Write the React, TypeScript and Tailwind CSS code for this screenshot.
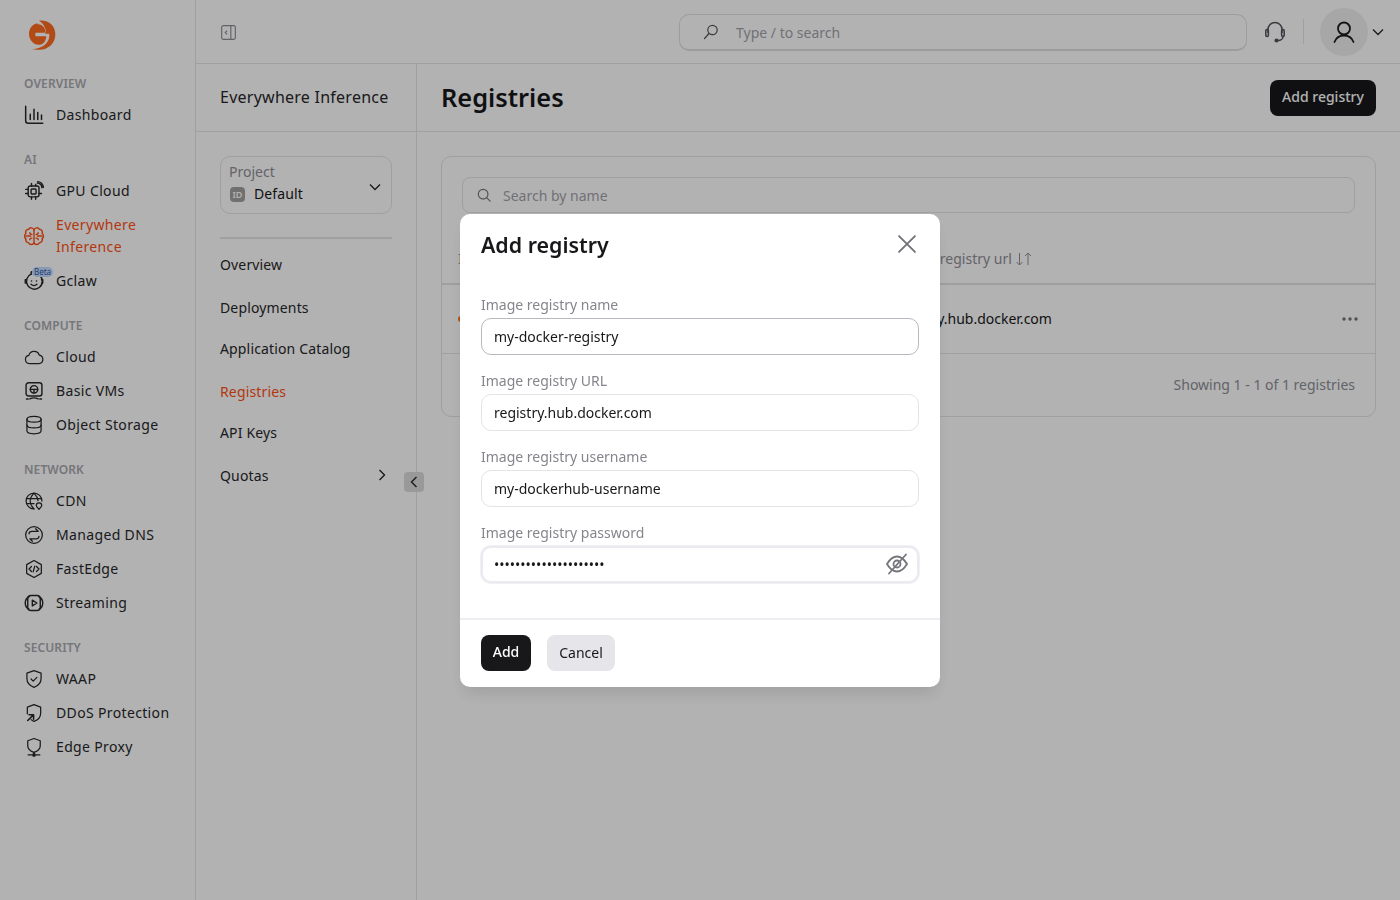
import React from "react";

const S = ({ className = "w-[20px] h-[20px]", children, sw = 1.7 }: { className?: string; children: React.ReactNode; sw?: number }) => (
  <svg viewBox="0 0 24 24" fill="none" stroke="currentColor" strokeWidth={sw} strokeLinecap="round" strokeLinejoin="round" className={className}>
    {children}
  </svg>
);

const Logo = () => (
  <svg viewBox="0 0 28 28.500" preserveAspectRatio="none" className="w-[28px] h-[30px]">
    <path fill="#ff6a1f" d="M11 .8c7-1.200 14 2.500 15.800 9.200 2 7.500-2 14.500-8.800 17-4.500 1.700-9.500 1.500-14.300.9 3.500-.4 7-1 10-2.400 5.500-2.600 8.400-7.700 7.400-12.500H17c.8-2 .8-3.800 0-5.500C15.500 4 13 2 11 .8z" />
    <path fill="#ff6a1f" d="M9.500 3C4.500 3.800 1 8 1 13c0 5.800 4.500 10.500 9.500 10.500 3.600 0 6.300-2 7.300-5.500.3-.9.500-1.700.5-2.500H7.500c-.3-1.200-.3-2.300 0-3.500h9.300c.6-1.800.3-3.500-1-5.200-1.500-2-3.800-3-6.300-2.800z" />
  </svg>
);

const Dash = () => (
  <S className="w-[20px] h-[20px]" sw={1.8}>
    <path d="M2 1.500V19a3 3 0 0 0 3 3h17.500" />
    <path d="M7.500 11v6.500M12 5v12.500M16.500 9v8.500M21 12v5.500" />
  </S>
);
const Gpu = () => (
  <S>
    <rect x="5" y="6" width="13" height="13" rx="2.500" />
    <rect x="8.500" y="9.500" width="6" height="6" rx="1" />
    <path d="M2 10h3M2 15h3M18 15h3M9 19v3M14 19v3M9 3v3M14 6V4" />
    <path d="M16 2.500a6 6 0 0 1 5.500 5.500M16.500 0.800a8 8 0 0 1 6.800 6.800" />
  </S>
);
const Brain = () => (
  <S>
    <path d="M12 5a3.500 3.500 0 0 0-6.500-1A3.500 3.500 0 0 0 2.300 9a3.800 3.800 0 0 0 0 6.200 3.500 3.500 0 0 0 3.200 4.800 3.500 3.500 0 0 0 6.500 .0 3.500 3.500 0 0 0 6.500 0 3.500 3.500 0 0 0 3.200-4.800 3.800 3.800 0 0 0 0-6.200A3.500 3.500 0 0 0 18.500 4 3.500 3.500 0 0 0 12 5z" />
    <path d="M12 5v15M2.500 12H8M21.500 12H16M7 8c0 1.500 1 2 2.500 2M17 8c0 1.500-1 2-2.500 2M7 16.500c0-1.500 1-2 2.500-2M17 16.500c0-1.500-1-2-2.500-2" />
  </S>
);
const Claw = () => (
  <S>
    <path d="M9 3.500a9.500 9.500 0 1 0 9.500 1.500" />
    <path d="M9 3.500C8 2 8.500.8 10 .8" />
    <path d="M3 10.500H1.500v4H3M21 10.500h1.500v4H21" />
    <circle cx="9" cy="12" r="1" fill="currentColor" stroke="none" />
    <circle cx="15" cy="12" r="1" fill="currentColor" stroke="none" />
    <path d="M8.500 16c2 2 5 2 7 0" />
  </S>
);
const Cloud = () => (
  <S sw={1.5}>
    <path d="M6.500 20A5 5 0 0 1 5.800 10.100a6.500 6.500 0 0 1 12.500-.4 5.200 5.200 0 0 1-.4 10.300z" />
  </S>
);
const Vm = () => (
  <S>
    <rect x="2.500" y="2" width="19" height="16" rx="3" />
    <circle cx="12" cy="10" r="4.500" />
    <path d="M7.500 10h9M12 10v4.500" />
    <path d="M7 21.500c3-1.500 7-1.500 10 0M3 21.500h2M19 21.500h2" />
  </S>
);
const Db = () => (
  <S sw={1.5}>
    <ellipse cx="12" cy="5" rx="8.500" ry="3.500" />
    <path d="M3.500 5v14c0 2 3.800 3.500 8.500 3.500s8.500-1.500 8.500-3.500V5" />
    <path d="M3.500 12c0 2 3.800 3.500 8.500 3.500s8.500-1.500 8.500-3.500" />
  </S>
);
const Globe = () => (
  <S sw={1.5}>
    <path d="M21.500 12A9.500 9.500 0 1 0 12 21.500" />
    <path d="M12 2.500c-6 6-6 13 0 19M12 2.500c3 3 4.500 6 4.800 9M3 9h18M3 15h9" />
    <path d="M18 22c-2-1.800-3.300-3-3.300-4.500a3.300 3.300 0 0 1 6.600 0c0 1.500-1.300 2.700-3.300 4.500z" />
  </S>
);
const Dns = () => (
  <S sw={1.5}>
    <circle cx="12" cy="12" r="10" />
    <path d="M6 10.500c0-2 1.500-3 3.500-3H17l-3-3M18 13.500c0 2-1.500 3-3.500 3H7l3 3" />
  </S>
);
const Edge = () => (
  <S sw={1.5}>
    <path d="M12 1.800l8.800 5v10.400L12 22.200l-8.800-5V6.800z" />
    <path d="M9 9l-3 3 3 3M15 9l3 3-3 3M13 8.500l-2 7" />
  </S>
);
const Stream = () => (
  <S>
    <path d="M6 4.500C3 6 1.500 8.500 1.500 12s1.500 6 4.500 7.500M18 4.500c3 1.500 4.500 4 4.500 7.500s-1.500 6-4.500 7.500" />
    <path d="M10 8.500l5.500 3.500-5.500 3.500z" />
    <rect x="4.500" y="3" width="15" height="18" rx="4" />
  </S>
);
const Shield = () => (
  <S sw={1.5}>
    <path d="M12 2l8.500 3v6.500c0 5-3.500 8.800-8.500 10.500-5-1.700-8.500-5.500-8.500-10.500V5z" />
    <path d="M8.500 12l2.500 2.500 4.500-4.500" />
  </S>
);
const Ddos = () => (
  <S sw={1.5}>
    <path d="M4 13V5l8-3 8 3v7c0 5-3.500 8.500-8 10-1.500-.5-2.500-1-3.500-2" />
    <path d="M4.500 21L11 14.500M6 14h5.500v5.500" strokeWidth="1.900" />
  </S>
);
const Proxy = () => (
  <S sw={1.5}>
    <path d="M12 1.800l7.500 2.700v6c0 3.800-3 6.500-7.500 8-4.500-1.500-7.500-4.200-7.500-8v-6z" />
    <path d="M12 18.500v2M5 21.500h4.500M14.500 21.500H19" />
    <circle cx="12" cy="21.500" r="1.500" fill="currentColor" />
  </S>
);

const Item = ({ icon, children, active, badge }: { icon: React.ReactNode; children: React.ReactNode; active?: boolean; badge?: boolean }) => (
  <div className={`relative flex items-center min-h-[34px] ${active ? "text-[#ff4f14]" : "text-[#27272a]"}`}>
    <span className="w-[32px] flex shrink-0 items-center">{icon}</span>
    <span className="text-[14px] leading-[22px] tracking-[0.35px]">{children}</span>
    {badge && (
      <span className="absolute left-[8px] top-[3px] rounded-[5px] bg-[#c6dcff] px-[2px] text-[8px] leading-[10px] text-[#2a5aa8]">Beta</span>
    )}
  </div>
);
const Label = ({ children, className = "" }: { children: React.ReactNode; className?: string }) => (
  <div className={`text-[12px] leading-[16px] font-semibold text-[#a9a9b0] mb-[6px] tracking-[0.1px] ${className}`}>{children}</div>
);

const Sidebar = () => (
  <aside className="w-[196px] shrink-0 border-r border-[#e4e4e7] pl-[24px] text-[#27272a]">
    <div className="h-[76px] pt-[20px] pl-[4px]">
      <Logo />
    </div>
    <Label>OVERVIEW</Label>
    <Item icon={<Dash />}>Dashboard</Item>
    <Label className="mt-[20px]">AI</Label>
    <Item icon={<Gpu />}>GPU Cloud</Item>
    <div className="py-[6px]">
      <Item icon={<Brain />} active>
        Everywhere
        <br />
        Inference
      </Item>
    </div>
    <Item icon={<Claw />} badge>Gclaw</Item>
    <Label className="mt-[20px]">COMPUTE</Label>
    <Item icon={<Cloud />}>Cloud</Item>
    <Item icon={<Vm />}>Basic VMs</Item>
    <Item icon={<Db />}>Object Storage</Item>
    <Label className="mt-[20px]">NETWORK</Label>
    <Item icon={<Globe />}>CDN</Item>
    <Item icon={<Dns />}>Managed DNS</Item>
    <Item icon={<Edge />}>FastEdge</Item>
    <Item icon={<Stream />}>Streaming</Item>
    <Label className="mt-[20px]">SECURITY</Label>
    <Item icon={<Shield />}>WAAP</Item>
    <Item icon={<Ddos />}>DDoS Protection</Item>
    <Item icon={<Proxy />}>Edge Proxy</Item>
  </aside>
);

const Topbar = () => (
  <header className="h-[64px] shrink-0 border-b border-[#e4e4e7] flex items-center pl-[25px] pr-[14px]">
    <svg viewBox="0 0 16 16" className="w-[15px] h-[15px] mt-[1px] text-[#8b8b93]" fill="none" stroke="currentColor" strokeWidth="1.200">
      <rect x="0.700" y="0.700" width="14.600" height="14.600" rx="2" />
      <path d="M10.500 1v14M6.500 6L4.500 8l2 2" />
    </svg>
    <div className="ml-[443px] mt-[1px] w-[568px] h-[37px] rounded-[10px] border border-[#e0e0e3] border-b-2 flex items-center pl-[22px]">
      <svg viewBox="0 0 18 18" className="w-[18px] h-[18px] text-[#56565c]" fill="none" stroke="currentColor" strokeWidth="1.200" strokeLinecap="round">
        <circle cx="10.500" cy="7" r="4.700" />
        <path d="M7 10.500L2.500 15.500" />
      </svg>
      <span className="ml-[16px] pt-[1px] text-[14px] text-[#a3a3ab]">Type / to search</span>
    </div>
    <svg viewBox="0 0 24 24" className="ml-[16px] w-[24px] h-[24px] text-[#52525b]" fill="none" stroke="currentColor" strokeWidth="1.500">
      <path d="M5 13V9.500a7 7 0 0 1 14 0V13" />
      <rect x="2.800" y="9.500" width="2.600" height="7" rx="1.200" />
      <rect x="18.600" y="9.500" width="2.600" height="7" rx="1.200" />
      <path d="M20 16.500c0 2.500-2.500 4-5 4" />
      <circle cx="13.500" cy="20.500" r="1.300" fill="currentColor" />
    </svg>
    <div className="ml-[16px] w-px h-[25px] bg-[#e4e4e7]" />
    <div className="ml-[16px] w-[48px] h-[48px] rounded-full bg-[#f0f0f0] flex items-center justify-center text-[#1c1c20]">
      <svg viewBox="0 0 24 24" className="w-[24px] h-[24px]" fill="none" stroke="currentColor" strokeWidth="1.800" strokeLinecap="round">
        <circle cx="12" cy="8.500" r="6" />
        <path d="M2.500 22c1.500-4 5-6.500 9.500-6.500S20 18 21.500 22" />
      </svg>
    </div>
    <svg viewBox="0 0 12 8" className="ml-[4px] w-[12px] h-[8px] text-[#27272a]" fill="none" stroke="currentColor" strokeWidth="1.300">
      <path d="M1 1.500l5 5 5-5" />
    </svg>
  </header>
);

const nav: [string, string][] = [
  ["Overview", "mt-[13px]"],
  ["Deployments", "mt-[19px]"],
  ["Application Catalog", "mt-[17px]"],
  ["Registries", "mt-[19px]"],
  ["API Keys", "mt-[17px]"],
  ["Quotas", "mt-[19px]"],
];

const SubNav = () => (
  <div className="relative w-[221px] shrink-0 border-r border-[#e4e4e7]">
    <div className="h-[68px] border-b border-[#e4e4e7] flex items-center pl-[24px] pb-[2px] text-[16px] text-[#27272a] tracking-[0.25px]">
      Everywhere Inference
    </div>
    <div className="mx-[24px] mt-[24px] w-[172px] h-[58px] rounded-[10px] border border-[#e4e4e7] px-[8px] pt-[5px] relative">
      <div className="text-[14px] leading-[20px] text-[#8e8e96]">Project</div>
      <div className="flex items-center mt-[1px] text-[14px] leading-[22px] text-[#18181b]">
        <span className="w-[15px] h-[15px] ml-[1px] rounded-[4px] bg-[#a1a1a1] text-white text-[9px] leading-[15px] text-center font-semibold">ID</span>
        <span className="ml-[9px] tracking-[0.1px]">Default</span>
      </div>
      <svg viewBox="0 0 12 8" className="absolute right-[10px] top-[26px] w-[12px] h-[8px] text-[#27272a]" fill="none" stroke="currentColor" strokeWidth="1.300">
        <path d="M1 1.500l5 5 5-5" />
      </svg>
    </div>
    <div className="mx-[24px] mt-[23px] w-[172px] h-[2px] bg-[#e4e4e7]" />
    <div className="px-[24px]">
      {nav.map(([t, m]) => (
        <div key={t} className={`${m} h-[24px] flex items-center justify-between text-[14px] tracking-[0.15px] ${t === "Registries" ? "text-[#ff4f14]" : "text-[#27272a]"}`}>
          {t}
          {t === "Quotas" && (
            <svg viewBox="0 0 8 12" className="w-[8px] h-[12px] mr-[6px]" fill="none" stroke="currentColor" strokeWidth="1.400">
              <path d="M1.500 1l5 5-5 5" />
            </svg>
          )}
        </div>
      ))}
    </div>
    <div className="absolute left-[208px] top-[408px] w-[20px] h-[20px] rounded-[4px] bg-[#dcdcdc] flex items-center justify-center text-[#27272a]">
      <svg viewBox="0 0 8 12" className="w-[8px] h-[12px]" fill="none" stroke="currentColor" strokeWidth="1.400">
        <path d="M6.500 1l-5 5 5 5" />
      </svg>
    </div>
  </div>
);

const Main = () => (
  <main className="flex-1 min-w-0">
    <div className="h-[68px] border-b border-[#e4e4e7] flex items-center justify-between pl-[24px] pr-[24px]">
      <h1 className="text-[25.400px] font-semibold text-[#18181b]">Registries</h1>
      <button className="h-[36px] w-[106px] rounded-[8px] bg-[#18181b] text-white text-[14px] font-medium pb-[2px]">Add registry</button>
    </div>
    <div className="mx-[24px] mt-[24px] h-[261px] rounded-[10px] border border-[#e4e4e7]">
      <div className="px-[20px] pt-[20px]">
        <div className="h-[36px] rounded-[8px] border border-[#e4e4e7] flex items-center pl-[14px]">
          <svg viewBox="0 0 16 16" className="w-[14px] h-[14px] text-[#71717a]" fill="none" stroke="currentColor" strokeWidth="1.300" strokeLinecap="round">
            <circle cx="7" cy="7" r="5.500" />
            <path d="M11 11l4 4" />
          </svg>
          <span className="ml-[12px] text-[14px] text-[#a3a3ab]">Search by name</span>
        </div>
      </div>
      <div className="h-[72px] border-b-2 border-[#e4e4e7] flex items-end pb-[14px] text-[14px] text-[#8e8e96] relative">
        <span className="ml-[16px] w-[436px]">Image registry name</span>
        <span>Image registry url</span>
        <svg viewBox="0 0 18 14" className="ml-[3px] mb-[3px] w-[18px] h-[14px]" fill="none" stroke="currentColor" strokeWidth="1">
          <path d="M4.500 1v12M1.500 10l3 3 3-3M13 13V1M10 4l3-3 3 3" />
        </svg>
      </div>
      <div className="h-[69px] border-b border-[#e4e4e7] flex items-center text-[14px] text-[#18181b]">
        <span className="ml-[16px] w-[6px] h-[6px] rounded-full bg-[#f97316] mr-[430px]" />
        <span className="flex-1 pb-[2px]">registry.hub.docker.com</span>
        <svg viewBox="0 0 16 4" className="w-[16px] h-[4px] mr-[17px] text-[#71717a]" fill="currentColor">
          <circle cx="2" cy="2" r="1.700" />
          <circle cx="8" cy="2" r="1.700" />
          <circle cx="14" cy="2" r="1.700" />
        </svg>
      </div>
      <div className="h-[61px] flex items-center justify-end pr-[20px] text-[14px] text-[#8e8e96]">Showing 1 - 1 of 1 registries</div>
    </div>
  </main>
);

const Field = ({ label, value, type = "text", cls, icon }: { label: string; value: string; type?: string; cls: string; icon?: boolean }) => (
  <div className="mb-[16px]">
    <label className="block text-[14px] leading-[20px] text-[#85858d] mb-[3px]">{label}</label>
    <div className="relative">
      <input
        readOnly
        type={type}
        value={value}
        className={`block w-full h-[37px] rounded-[10px] bg-white text-[14px] text-[#18181b] outline-none ${cls}`}
      />
      {icon && (
        <svg viewBox="0 0 24 24" className="absolute right-[10px] top-[6px] w-[24px] h-[24px] text-[#75757c]" fill="none" stroke="currentColor" strokeWidth="1.800" strokeLinecap="round">
          <path d="M2 12c3-5 6-7.500 10-7.500S19 7 22 12c-3 5-6 7.500-10 7.500S5 17 2 12z" />
          <circle cx="12" cy="12" r="3.500" />
          <path d="M21 2.500L4 21.500" />
        </svg>
      )}
    </div>
  </div>
);

const Modal = () => (
  <div className="fixed inset-0 bg-black/30 flex items-center justify-center">
    <div className="w-[480px] h-[473px] rounded-[10px] bg-white shadow-[0_10px_15px_-3px_rgba(0,0,0,0.1)] flex flex-col">
      <div className="h-[62px] flex items-center justify-between pl-[21px] pr-[22px]">
        <h2 className="text-[21.400px] font-semibold text-[#18181b] pt-[2px]">Add registry</h2>
        <svg viewBox="0 0 18 18" className="w-[22px] h-[22px] mt-[-2px] text-[#71717a]" fill="none" stroke="currentColor" strokeWidth="1.500" strokeLinecap="round">
          <path d="M2.500 2.500l13 13M15.500 2.500l-13 13" />
        </svg>
      </div>
      <div className="flex-1 px-[21px] pt-[19px]">
        <Field label="Image registry name" value="my-docker-registry" cls="px-[12px] border border-[#b8b8be]" />
        <Field label="Image registry URL" value="registry.hub.docker.com" cls="px-[12px] border border-[#e4e4e7]" />
        <Field label="Image registry username" value="my-dockerhub-username" cls="px-[12px] border border-[#e4e4e7]" />
        <Field label="Image registry password" value="•••••••••••••••••••••" type="password" icon cls="pl-[11px] pr-[44px] border-2 border-[#eaeaf0] shadow-[0_0_0_1px_#f0f0f5]" />
      </div>
      <div className="h-[69px] border-t-2 border-[#eeeef2] flex items-center pl-[21px] gap-[16px] pb-[1px]">
        <button className="h-[36px] w-[50px] rounded-[8px] bg-[#18181b] text-white text-[14px] font-medium pb-[2px]">Add</button>
        <button className="h-[36px] w-[68px] rounded-[8px] bg-[#e6e5e9] text-[#18181b] text-[14px]">Cancel</button>
      </div>
    </div>
  </div>
);

export default function App() {
  return (
    <div className="relative flex h-screen overflow-hidden bg-white font-['Noto_Sans',sans-serif]">
      <Sidebar />
      <div className="flex-1 min-w-0 flex flex-col">
        <Topbar />
        <div className="flex-1 flex">
          <SubNav />
          <Main />
        </div>
      </div>
      <Modal />
    </div>
  );
}
